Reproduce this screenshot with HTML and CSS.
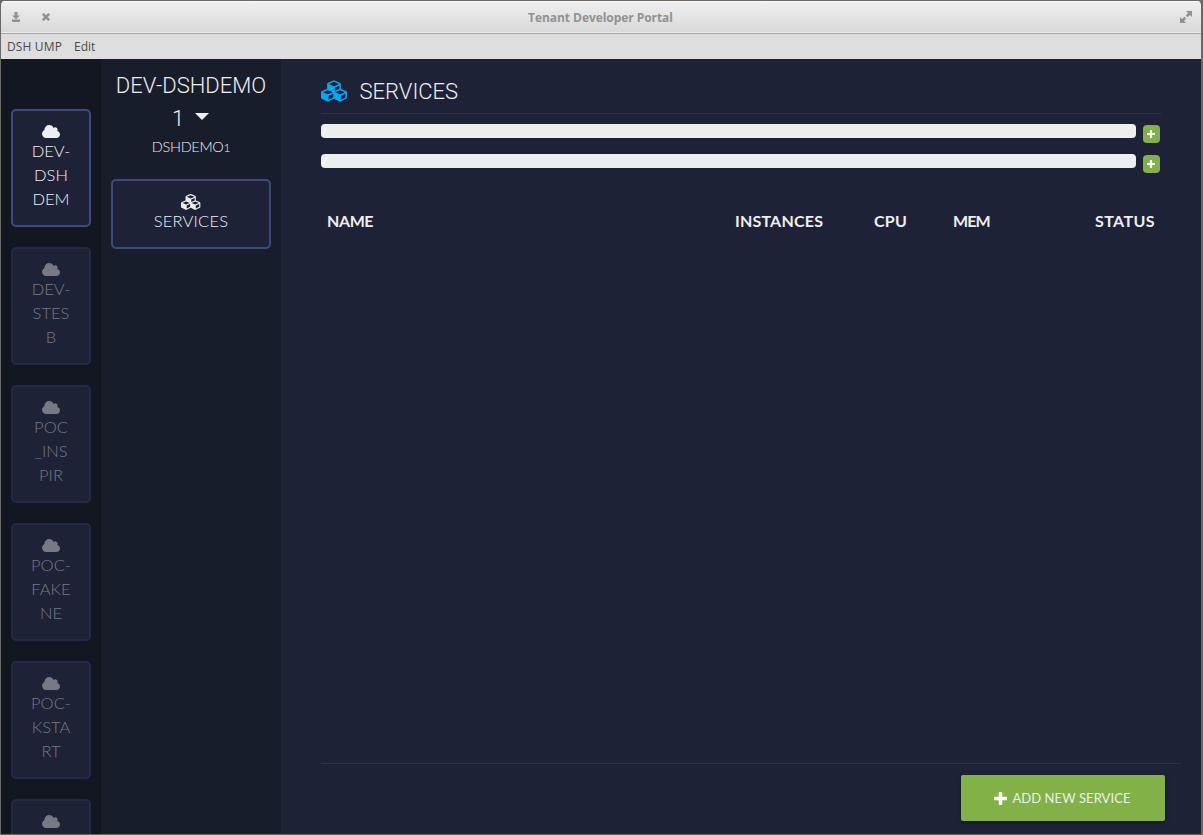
FILE: index.html
```html
<!DOCTYPE html>
<html lang="en">
<head>
<meta charset="utf-8">
<title>Tenant Developer Portal</title>
<link rel="stylesheet" href="styles.css">
</head>
<body>
<svg class="defs" aria-hidden="true">
  <symbol id="cloud" viewBox="0 128 1920 1408" preserveAspectRatio="none"><path d="M1920 1152q0 159-112.500 271.500t-271.500 112.500h-1088q-185 0-316.500-131.500t-131.500-316.500q0-130 70-240t188-165q-2-30-2-43 0-212 150-362t362-150q156 0 285.500 87t188.500 227q71-62 166-62 106 0 181 75t75 181q0 76-41 138 130 31 213.500 135.500t83.500 238.500z"/></symbol>
  <symbol id="cubes" viewBox="0 0 2304 1792"><path d="M640 1632l384-192v-314l-384 164v342zm-64-454l404-173-404-173-404 173zm1088 454l384-192v-314l-384 164v342zm-64-454l404-173-404-173-404 173zm-448-293l384-165v-266l-384 164v267zm-64-379l441-189-441-189-441 189zm1088 518v416q0 36-19 67t-52 47l-448 224q-25 14-57 14t-57-14l-448-224q-4-2-7-4-2 2-7 4l-448 224q-25 14-57 14t-57-14l-448-224q-33-16-52-47t-19-67v-416q0-38 21.500-70t56.500-48l434-186v-400q0-38 21.500-70t56.500-48l448-192q23-10 50-10t50 10l448 192q35 16 56.500 48t21.500 70v400l434 186q36 16 57 48t21 70z"/></symbol>
  <symbol id="plus" viewBox="192 128 1408 1408"><path d="M1600 736v192q0 40-28 68t-68 28h-416v416q0 40-28 68t-68 28h-192q-40 0-68-28t-28-68v-416h-416q-40 0-68-28t-28-68v-192q0-40 28-68t68-28h416v-416q0-40 28-68t68-28h192q40 0 68 28t28 68v416h416q40 0 68 28t28 68z"/></symbol>
</svg>
<div class="window">
  <header class="titlebar">
    <svg class="minimize" viewBox="0 0 9 10"><path d="M3 0h3v3.500h2.500L4.500 7.300.5 3.500H3zM.5 7.500h8V10h-8z"/></svg>
    <svg class="close" viewBox="0 0 8 8"><path d="M.8.800l6.400 6.400M7.200.800L.8 7.200"/></svg>
    <h1 class="title">Tenant Developer Portal</h1>
    <svg class="maximize" viewBox="0 0 12 12"><path d="M6 0h6v6l-2-2-2.500 2.200-1.700-1.700L8 2zM6 12H0V6l2 2 2.500-2.200 1.700 1.700L4 10z"/></svg>
  </header>
  <nav class="menubar"><span class="menu-app">DSH UMP</span><span class="menu-edit">Edit</span></nav>
  <div class="body">
    <aside class="tenants">
      <a class="tenant active"><svg class="cloud"><use href="#cloud"/></svg><span>DEV-</span><span>DSH</span><span>DEM</span></a>
      <a class="tenant"><svg class="cloud"><use href="#cloud"/></svg><span>DEV-</span><span>STES</span><span>B</span></a>
      <a class="tenant"><svg class="cloud"><use href="#cloud"/></svg><span>POC</span><span>_INS</span><span>PIR</span></a>
      <a class="tenant"><svg class="cloud"><use href="#cloud"/></svg><span>POC-</span><span>FAKE</span><span>NE</span></a>
      <a class="tenant"><svg class="cloud"><use href="#cloud"/></svg><span>POC-</span><span>KSTA</span><span>RT</span></a>
      <a class="tenant"><svg class="cloud"><use href="#cloud"/></svg></a>
    </aside>
    <aside class="sidebar">
      <h2 class="tenant-name"><span>DEV-DSHDEMO</span><span class="tenant-num"><span>1</span><i class="caret"></i></span></h2>
      <p class="user">DSHDEMO<span class="small-figure">1</span></p>
      <a class="nav-item"><svg class="cubes"><use href="#cubes"/></svg><span>SERVICES</span></a>
    </aside>
    <main class="main">
      <div class="page-head"><svg class="cubes-lg"><use href="#cubes"/></svg><h2>SERVICES</h2></div>
      <div class="usage">
        <div class="usage-row"><div class="bar">/</div><button class="add"><svg><use href="#plus"/></svg></button></div>
        <div class="usage-row"><div class="bar">/</div><button class="add"><svg><use href="#plus"/></svg></button></div>
      </div>
      <div class="columns"><span class="c-name">NAME</span><span class="c-inst">INSTANCES</span><span class="c-cpu">CPU</span><span class="c-mem">MEM</span><span class="c-status">STATUS</span></div>
      <footer class="actions"><button class="new-service"><svg><use href="#plus"/></svg><span>ADD NEW SERVICE</span></button></footer>
    </main>
  </div>
</div>
</body>
</html>
```
FILE: styles.css
```css
* { box-sizing: border-box; }
body { margin: 0; height: 835px; overflow: hidden; padding: 1px 2px 1px 1px; background: #6b6966; font-family: Lato, "Liberation Sans", sans-serif; }
h1, h2, p { margin: 0; font-weight: 300; }
svg { display: block; flex: none; fill: currentColor; }
button { border: 0; padding: 0; font: inherit; color: inherit; }
.defs { display: none; }
.window { height: 833px; border-radius: 4px 4px 0 0; overflow: hidden; display: flex; flex-direction: column; background: #1d2237; color: #eee; }
.titlebar { height: 33px; flex: none; display: flex; align-items: center; padding: 0 9px 0 10px; background: linear-gradient(#f0f0f0, #d8d8d8); border-bottom: 1px solid #a6a6a6; box-shadow: inset 0 1px #fafafa, inset 0 -1px #e9e9e9; color: #929292; }
.minimize { width: 10px; height: 10px; }
.close { width: 8px; height: 8px; margin-left: 21px; fill: none; stroke: currentColor; stroke-width: 2.600; }
.title { flex: 1; text-align: center; padding: 2px 29px 0 0; font: bold 12px/20px "Open Sans", "Noto Sans", sans-serif; letter-spacing: -.06px; }
.maximize { width: 12px; height: 12px; }
.menubar { height: 25px; flex: none; display: flex; gap: 12px; padding-left: 6px; background: #dedede; color: #4a4a4a; font: 12px/25px "Open Sans", "Noto Sans", sans-serif; }
.menu-app { letter-spacing: .14px; }
.body { flex: 1; min-height: 0; display: flex; }
.tenants { width: 100px; flex: none; padding: 50px 10px 0; background: #131722; display: flex; flex-direction: column; gap: 20px; overflow: hidden; }
.tenant { height: 118px; flex: none; display: flex; flex-direction: column; align-items: center; padding-top: 14px; border: 2px solid #222a48; border-radius: 5px; background: #1d2237; color: #777983; font-weight: 300; font-size: 16.500px; line-height: 24px; }
.tenant.active { border-color: #3c4b7e; color: #eee; }
.cloud { width: 18px; height: 13px; margin-bottom: 1px; }
.sidebar { width: 180px; flex: none; padding: 10px 10px 0; background: #181d2c; text-align: center; }
.tenant-name { display: flex; flex-direction: column; font: 300 22px/33px Roboto, sans-serif; }
.tenant-num { display: flex; justify-content: center; align-items: center; gap: 12px; padding-right: 1px; }
.caret { border: 7px solid transparent; border-top: 7px solid #eee; border-bottom: 0; margin: -5px 0 0 -1px; }
.user { margin-top: 2px; font-size: 14.500px; font-weight: 300; line-height: 20px; letter-spacing: -.3px; }
.small-figure { font-size: 12px; }
.nav-item { margin-top: 21px; height: 70px; display: flex; flex-direction: column; align-items: center; padding-top: 13px; border: 2px solid #3c4b7e; border-radius: 5px; background: #1d2237; font-weight: 300; font-size: 16.500px; line-height: 24px; letter-spacing: .2px; }
.cubes { width: 20.500px; height: 16px; margin-bottom: -1px; }
.main { flex: 1; padding: 10px 20px 0 40px; display: flex; flex-direction: column; }
.page-head { height: 45px; width: 840px; flex: none; display: flex; align-items: center; gap: 11px; border-bottom: 1px solid #293357; }
.page-head h2 { padding-top: 2px; font: 300 22px/42px Roboto, sans-serif; }
.cubes-lg { width: 27.500px; height: 22px; color: #03a9f4; }
.usage { margin-top: 10px; display: flex; flex-direction: column; gap: 11px; }
.usage-row { width: 839px; height: 19px; display: flex; justify-content: space-between; }
.bar { width: 815px; height: 14px; border-radius: 4px; padding-left: 1px; background: #eee; color: #fff; font-size: 12px; font-style: italic; line-height: 14px; }
.add { width: 17.500px; height: 17.500px; margin-top: 1px; border-radius: 4px; background: #82b247; color: #fff; display: flex; align-items: center; justify-content: center; }
.add svg { width: 8px; height: 8px; }
.columns { margin-top: 36px; height: 24px; display: flex; font-weight: 700; font-size: 16px; line-height: 24px; white-space: nowrap; }
.c-name { width: 414px; padding-left: 6px; letter-spacing: -.4px; }
.c-inst { width: 139px; letter-spacing: .2px; }
.c-cpu { width: 79px; letter-spacing: .2px; }
.c-mem { width: 142px; letter-spacing: -.9px; }
.c-status { letter-spacing: .4px; }
.actions { margin-top: auto; height: 71px; border-top: 1px solid #2a3152; padding: 11px 16px 0 0; display: flex; justify-content: flex-end; }
.new-service { width: 204px; height: 46px; border-radius: 2px; background: #82b247; box-shadow: 0 2px 5px rgba(0,0,0,.35); display: flex; align-items: center; justify-content: center; gap: 5px; padding-right: 1px; font-size: 13px; letter-spacing: .07px; }
.new-service svg { width: 13px; height: 13px; color: #fff; }
```
